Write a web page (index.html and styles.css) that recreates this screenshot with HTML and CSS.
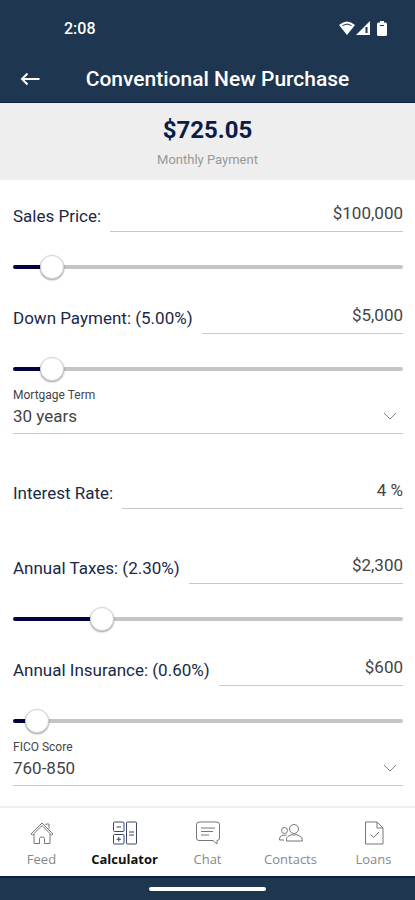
FILE: index.html
```html
<!DOCTYPE html>
<html lang="en">
  <head>
    <meta charset="UTF-8" />
    <meta name="viewport" content="width=device-width, initial-scale=1.0" />
    <title>Conventional New Purchase</title>
    <link rel="stylesheet" href="styles.css">
  </head>
  <body>
    <header class="header">
      <div class="status-bar">
        <span class="clock">2:08</span>
        <div class="status-icons">
          <svg width="16" height="14" viewBox="0 0 16 14">
            <path d="M0 4Q8-3 16 4L8 14Z" fill="#fff" />
            <path d="M3.500 4.500Q8 1.500 12.500 4.500" fill="none" stroke="#1e3650" stroke-width="1" />
          </svg>
          <svg width="14" height="14" viewBox="0 0 14 14">
            <path d="M0 14L14 0V14Z" fill="#fff" />
            <path d="M10.500 6V12" stroke="#1e3650" stroke-width="2" />
          </svg>
          <svg class="battery" width="10" height="15" viewBox="0 0 10 15">
            <path d="M3 0H7V1.500H8.500Q10 1.500 10 3V13.500Q10 15 8.500 15H1.500Q0 15 0 13.500V3Q0 1.500 1.500 1.500H3Z" fill="#fff" />
            <path d="M3 4.500H7" stroke="#1e3650" stroke-width="1" />
          </svg>
        </div>
      </div>
      <div class="toolbar">
        <button class="back-btn" type="button" aria-label="Back">
          <svg width="20" height="14" viewBox="0 0 20 14" fill="none" stroke="#fff" stroke-width="2">
            <path d="M19.500 7H2M7.500 1.500L2 7L7.500 12.500" />
          </svg>
        </button>
        <h1 class="title">Conventional New Purchase</h1>
      </div>
    </header>

    <section class="summary">
      <div class="amount">$725.05</div>
      <div class="caption">Monthly Payment</div>
    </section>

    <main class="form">
      <div class="field">
        <label for="price">Sales Price:</label>
        <input class="value" id="price" type="text" value="$100,000" />
      </div>
      <input class="slider" type="range" aria-label="Sales Price" min="0" max="1000" value="74" style="--fill: 7.4%" />

      <div class="field">
        <label for="down">Down Payment: (5.00%)</label>
        <input class="value" id="down" type="text" value="$5,000" />
      </div>
      <input class="slider" type="range" aria-label="Down Payment" min="0" max="1000" value="74" style="--fill: 7.4%" />

      <div class="picker">
        <label for="term">Mortgage Term</label>
        <select id="term">
          <option>30 years</option>
        </select>
        <svg class="chevron" width="14" height="8" viewBox="0 0 14 8" fill="none" stroke="#858585" stroke-width="1">
          <path d="M1 1L7 7L13 1" />
        </svg>
      </div>

      <div class="field spaced">
        <label for="rate">Interest Rate:</label>
        <input class="value" id="rate" type="text" value="4 %" />
      </div>

      <div class="field spaced">
        <label for="taxes">Annual Taxes: (2.30%)</label>
        <input class="value" id="taxes" type="text" value="$2,300" />
      </div>
      <input class="slider" type="range" aria-label="Annual Taxes" min="0" max="1000" value="210" style="--fill: 21%" />

      <div class="field">
        <label for="insurance">Annual Insurance: (0.60%)</label>
        <input class="value" id="insurance" type="text" value="$600" />
      </div>
      <input class="slider" type="range" aria-label="Annual Insurance" min="0" max="1000" value="33" style="--fill: 3.3%" />

      <div class="picker">
        <label for="fico">FICO Score</label>
        <select id="fico">
          <option>760-850</option>
        </select>
        <svg class="chevron" width="14" height="8" viewBox="0 0 14 8" fill="none" stroke="#858585" stroke-width="1">
          <path d="M1 1L7 7L13 1" />
        </svg>
      </div>
    </main>

    <nav class="tabs">
      <a class="tab" href="#feed">
        <svg width="24" height="24" viewBox="0 0 24 24">
          <path d="M1 13L12 2L23 13L21.500 14L12 4.500L2.500 14ZM16 4V3H19V7.500M4 13V22.500H9.500V17.500Q9.500 16 12 16T14.500 17.500V22.500H20V13" />
        </svg>
        Feed
      </a>
      <a class="tab active" href="#calculator">
        <svg width="24" height="24" viewBox="0 0 24 24">
          <rect x="0.500" y="1" width="10.500" height="9.500" rx="1" />
          <rect x="0.500" y="13.500" width="10.500" height="9.500" rx="1" />
          <rect x="13.500" y="1" width="10" height="22" rx="1" />
          <path d="M3.500 6H8M3.500 18.250H8M5.750 16V20.500M16 11H21M16 14H21" />
        </svg>
        Calculator
      </a>
      <a class="tab" href="#chat">
        <svg width="24" height="24" viewBox="0 0 24 24">
          <path d="M3 1H21Q23.500 1 23.500 3.500V17Q23.500 19.500 21 19.500V23L17 19.500H3Q0.500 19.500 0.500 17V3.500Q0.500 1 3 1ZM5 7H19M5 10.500H17M5 14H13" />
        </svg>
        Chat
      </a>
      <a class="tab" href="#contacts">
        <svg width="24" height="24" viewBox="0 0 24 24">
          <circle cx="15" cy="8" r="4.500" />
          <circle cx="5.500" cy="9.500" r="3" />
          <path d="M7.500 20Q7 15.500 11 14.500L13 13.500Q15 15 17 13.500L20 14.500Q23.500 16 23.500 20ZM5 19H0.500Q0 15.500 3 14.500L4.500 14Q6 15 7.500 14" />
        </svg>
        Contacts
      </a>
      <a class="tab" href="#loans">
        <svg width="24" height="24" viewBox="0 0 24 24">
          <path d="M3.500 1H15L21 7V23H3.500ZM15 1V7H21M8.500 13.500L11.500 16.500L17 11" />
        </svg>
        Loans
      </a>
    </nav>
    <footer class="gesture-bar"></footer>
  </body>
</html>
```
FILE: styles.css
```css
* {
  margin: 0;
  padding: 0;
  box-sizing: border-box;
}

body {
  font-family: Roboto, "Liberation Sans", sans-serif;
  background: #fff;
  color: #444;
  min-height: 100vh;
  display: flex;
  flex-direction: column;
}

.header {
  background: #1e3650;
  color: #fff;
  border-bottom: 1px solid #0d2145;
}

.status-bar {
  display: flex;
  justify-content: space-between;
  align-items: center;
  height: 56px;
  padding: 0 28px 0 64px;
}

.clock {
  font-size: 16px;
  font-weight: 500;
}

.status-icons {
  display: flex;
  align-items: center;
  gap: 1px;
}

.battery {
  margin-left: 6px;
}

.toolbar {
  display: grid;
  grid-template-columns: 60px 1fr 40px;
  align-items: center;
  height: 46px;
}

.back-btn {
  background: none;
  border: none;
  height: 46px;
  cursor: pointer;
}

.back-btn svg {
  display: block;
  margin: 0 auto;
}

.title {
  font-size: 21px;
  font-weight: 500;
  text-align: center;
  white-space: nowrap;
}

.summary {
  background: #eee;
  height: 77px;
  padding-top: 12px;
  text-align: center;
}

.amount {
  font-size: 24px;
  font-weight: 700;
  line-height: 30px;
  color: #0c1c48;
}

.caption {
  font-size: 13px;
  line-height: 16px;
  margin-top: 7px;
  color: #999;
}

.form {
  flex: 1;
  padding: 20px 12px 20px 13px;
}

.field {
  display: flex;
  align-items: center;
  gap: 9px;
}

.field label {
  font-size: 17px;
  line-height: 20px;
  color: #1a2848;
}

.value {
  flex: 1;
  min-width: 0;
  height: 32px;
  padding-bottom: 6px;
  border: none;
  border-bottom: 1px solid #c8c8c8;
  background: none;
  font: inherit;
  font-size: 17px;
  color: #444;
  text-align: right;
  outline: none;
}

.slider {
  appearance: none;
  display: block;
  width: 100%;
  height: 24px;
  margin: 23px 0;
  background: none;
}

.slider::-webkit-slider-runnable-track {
  height: 4px;
  border-radius: 2px;
  background: linear-gradient(#02023c, #02023c) 0 / var(--fill) 100% no-repeat #c5c5c5;
}

.slider::-webkit-slider-thumb {
  appearance: none;
  width: 24px;
  height: 24px;
  margin-top: -10px;
  border-radius: 50%;
  border: 1px solid #d4d4d4;
  background: #fff;
  box-shadow: 0 1px 2px rgba(0, 0, 0, 0.4);
}

.picker {
  display: grid;
  grid-template-columns: 1fr 20px;
  margin-top: -16px;
  border-bottom: 1px solid #c8c8c8;
}

.picker label {
  grid-column: 1 / 3;
  font-size: 12px;
  line-height: 14px;
}

.picker select {
  grid-area: 2 / 1 / 3 / 3;
  appearance: none;
  height: 31px;
  padding-bottom: 3px;
  border: none;
  background: none;
  font: inherit;
  font-size: 17px;
  color: #444;
}

.chevron {
  grid-area: 2 / 2 / 3 / 3;
  margin-top: 10px;
  pointer-events: none;
}

.spaced {
  margin-top: 43px;
}

.tabs {
  display: grid;
  grid-template-columns: repeat(5, 1fr);
  height: 70px;
  padding-top: 13px;
  border-top: 2px solid #eee;
}

.tab {
  display: flex;
  flex-direction: column;
  align-items: center;
  gap: 5px;
  font-family: "Open Sans", "Noto Sans", sans-serif;
  font-size: 13px;
  line-height: 18px;
  color: #888;
  text-decoration: none;
}

.tab svg {
  fill: none;
  stroke: #777;
  stroke-width: 1;
}

.tab.active {
  font-weight: 700;
  color: #111;
}

.tab.active svg {
  stroke: #3c4668;
}

.gesture-bar {
  display: flex;
  justify-content: center;
  align-items: center;
  height: 24px;
  background: #1e3650;
  border-top: 2px solid #08204a;
}

.gesture-bar::after {
  content: "";
  width: 28%;
  height: 4px;
  border-radius: 2px;
  background: #fff;
}
```
